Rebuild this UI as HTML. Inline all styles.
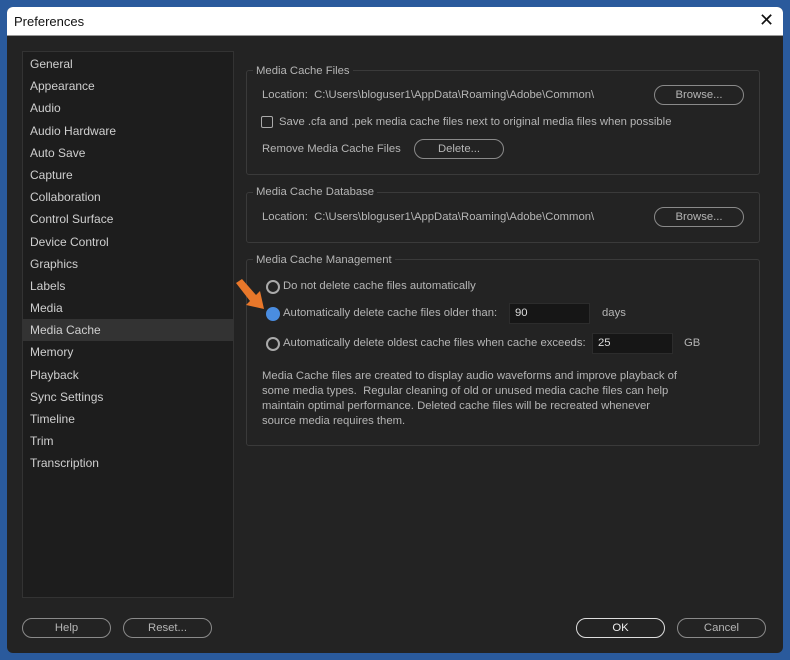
<!DOCTYPE html>
<html><head><style>
body{margin:0;width:790px;height:660px;background:#2a5a9c;font-family:"Liberation Sans",sans-serif;overflow:hidden;position:relative}
.win{position:absolute;left:7px;top:7px;width:776px;height:646px;background:#232323;border-radius:6px;overflow:hidden}
.title{position:absolute;left:0;top:0;width:776px;height:28px;background:#fff;border-bottom:1px solid #999}
.title span{position:absolute;left:7px;top:7px;font-size:13px;color:#111}
.title .x{left:752px;top:3px;font-size:18px}
.list{position:absolute;left:15px;top:44px;width:210px;height:545px;background:#1d1d1d;border:1px solid #333}
.list div{height:22.2px;line-height:22px;padding-left:7px;font-size:12px;color:#cfcfcf}
.list .sel{background:#333}
.t{position:absolute;font-size:11.3px;color:#b5b5b5;white-space:nowrap}
.grp{position:absolute;border:1px solid #3a3a3a;border-radius:3px}
.gl{position:absolute;font-size:11.3px;color:#b5b5b5;background:#232323;padding:0 3px}
.btn{position:absolute;border:1.5px solid #8a8a8a;border-radius:10px;color:#b5b5b5;font-size:11.3px;text-align:center;height:18px;line-height:18px}
.in{position:absolute;background:#161616;border:1px solid #2c2c2c;color:#ddd;font-size:11.3px;height:19px;line-height:19px;padding-left:5px}
.r{position:absolute;width:10px;height:10px;border:2px solid #aaa;border-radius:50%}
</style></head><body>
<div class="win">
<div class="title"><span>Preferences</span><span class="x">✕</span></div>
<div class="list">
<div style="margin-top:1px">General</div><div>Appearance</div><div>Audio</div><div>Audio Hardware</div><div>Auto Save</div><div>Capture</div><div>Collaboration</div><div>Control Surface</div><div>Device Control</div><div>Graphics</div><div>Labels</div><div>Media</div><div class="sel">Media Cache</div><div>Memory</div><div>Playback</div><div>Sync Settings</div><div>Timeline</div><div>Trim</div><div>Transcription</div>
</div>

<div class="grp" style="left:239px;top:63px;width:512px;height:103px"></div>
<div class="gl" style="left:246px;top:58px">Media Cache Files</div>
<div class="t" style="left:255px;top:82px">Location:&nbsp; C:\Users\bloguser1\AppData\Roaming\Adobe\Common\</div>
<div class="btn" style="left:647px;top:78px;width:88px">Browse...</div>
<div style="position:absolute;left:254px;top:109px;width:10px;height:10px;border:1.5px solid #aaa;border-radius:2px"></div>
<div class="t" style="left:272px;top:109px">Save .cfa and .pek media cache files next to original media files when possible</div>
<div class="t" style="left:255px;top:136px">Remove Media Cache Files</div>
<div class="btn" style="left:407px;top:132px;width:88px">Delete...</div>

<div class="grp" style="left:239px;top:185px;width:512px;height:49px"></div>
<div class="gl" style="left:246px;top:179px">Media Cache Database</div>
<div class="t" style="left:255px;top:204px">Location:&nbsp; C:\Users\bloguser1\AppData\Roaming\Adobe\Common\</div>
<div class="btn" style="left:647px;top:200px;width:88px">Browse...</div>

<div class="grp" style="left:239px;top:252px;width:512px;height:185px"></div>
<div class="gl" style="left:246px;top:247px">Media Cache Management</div>
<div class="r" style="left:259px;top:273px"></div>
<div class="t" style="left:276px;top:273px">Do not delete cache files automatically</div>
<div class="r" style="left:259px;top:300px;background:#4a8de0;border-color:#4a8de0"></div>
<div class="t" style="left:276px;top:300px">Automatically delete cache files older than:</div>
<div class="in" style="left:502px;top:296px;width:74px">90</div>
<div class="t" style="left:595px;top:300px">days</div>
<div class="r" style="left:259px;top:330px"></div>
<div class="t" style="left:276px;top:330px">Automatically delete oldest cache files when cache exceeds:</div>
<div class="in" style="left:585px;top:326px;width:74px">25</div>
<div class="t" style="left:677px;top:330px">GB</div>
<div class="t" style="left:255px;top:362px;line-height:15px">Media Cache files are created to display audio waveforms and improve playback of<br>some media types.&nbsp; Regular cleaning of old or unused media cache files can help<br>maintain optimal performance. Deleted cache files will be recreated whenever<br>source media requires them.</div>
<svg style="position:absolute;left:225px;top:270px" width="36" height="36" viewBox="0 0 36 36"><path d="M4 6 L10 2 L24 18 L28 14 L32 32 L14 28 L18 24 Z" fill="#e8772a"/></svg>

<div class="btn" style="left:15px;top:611px;width:87px">Help</div>
<div class="btn" style="left:116px;top:611px;width:87px">Reset...</div>
<div class="btn" style="left:569px;top:611px;width:87px;border-color:#ddd;color:#eee">OK</div>
<div class="btn" style="left:670px;top:611px;width:87px">Cancel</div>
</div>
</body></html>
